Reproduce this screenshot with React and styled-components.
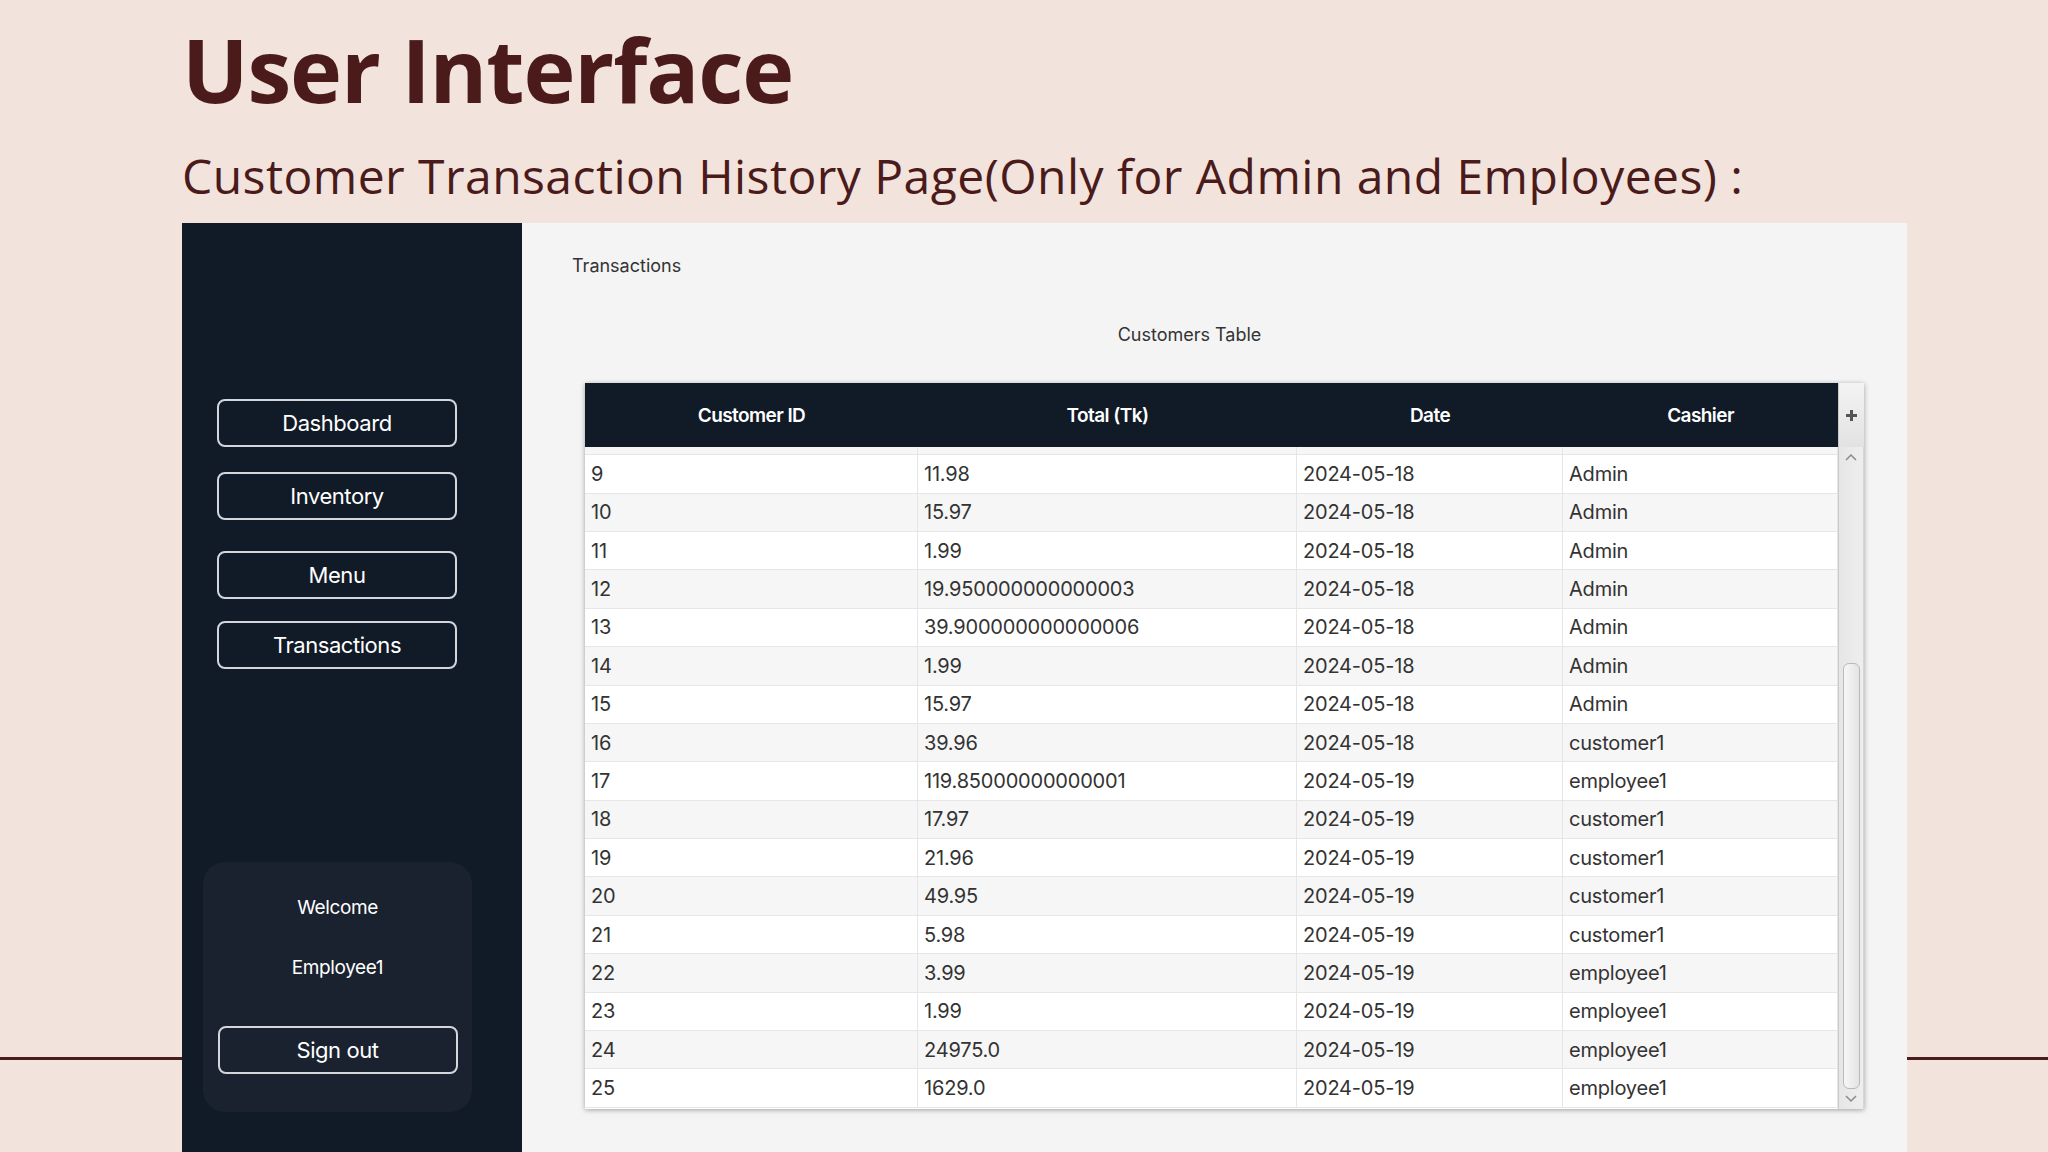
import React from 'react';
import styled, { createGlobalStyle } from 'styled-components';

const GlobalStyle = createGlobalStyle`
    html, body {
        margin: 0;
        padding: 0;
    }
    body {
        width: 2048px;
        height: 1152px;
        overflow: hidden;
        background: linear-gradient(#4b1c1c, #4b1c1c) 0 1057px / 100% 3px no-repeat, #f2e4dc;
    }
`;

const Slide = styled.div`
    padding: 17px 0 0 182px;
    height: 1152px;
    box-sizing: border-box;
`;

const Title = styled.h1`
    margin: 0;
    font-family: "Open Sans", "Noto Sans", sans-serif;
    font-size: 88px;
    font-weight: 700;
    line-height: 1.2;
    color: #4b1b1b;
    letter-spacing: -1.1px;
`;

const Subtitle = styled.h2`
    margin: 24px 0 0;
    font-family: "Open Sans", "Noto Sans", sans-serif;
    font-size: 48px;
    font-weight: 400;
    line-height: 1.2;
    color: #4b1b1b;
    letter-spacing: 0.45px;
`;

const Window = styled.div`
    margin-top: 19px;
    width: 1725px;
    height: 929px;
    display: flex;
    font-family: "Inter", "Liberation Sans", sans-serif;
`;

const Sidebar = styled.aside`
    width: 340px;
    flex-shrink: 0;
    background: #111a27;
    box-sizing: border-box;
    padding: 176px 0 40px 21px;
    display: flex;
    flex-direction: column;
    justify-content: space-between;
`;

const NavList = styled.nav`
    display: flex;
    flex-direction: column;
    padding-left: 14px;
`;

const NavButton = styled.button`
    width: 240px;
    height: 48px;
    margin-top: ${p => p.$gap || 0}px;
    background: transparent;
    border: 2px solid #d3d7dd;
    border-radius: 8px;
    color: #ffffff;
    font-family: "Inter", "Liberation Sans", sans-serif;
    font-size: 22px;
    letter-spacing: -0.02em;
    cursor: pointer;
`;

const UserCard = styled.div`
    width: 269px;
    height: 250px;
    box-sizing: border-box;
    padding: 34px 16px 38px;
    background: #1a2230;
    border-radius: 22px;
    display: flex;
    flex-direction: column;
    align-items: center;
`;

const UserText = styled.div`
    color: #ffffff;
    font-size: 19px;
    line-height: 24px;
    letter-spacing: -0.02em;
    margin-top: ${p => p.$gap || 0}px;
`;

const Main = styled.main`
    flex: 1;
    background: #f4f4f4;
    padding: 32px 43px 0 50px;
    box-sizing: border-box;
`;

const PageLabel = styled.div`
    font-size: 18px;
    line-height: 22px;
    color: #333;
`;

const TableCaption = styled.div`
    margin-top: 47px;
    padding: 0 70px 0 13px;
    text-align: center;
    font-size: 18px;
    line-height: 22px;
    color: #333;
`;

const TableView = styled.div`
    margin: 37px 0 0 13px;
    width: 1279px;
    box-shadow: 0 1px 5px rgba(0, 0, 0, 0.35);
    background: #fff;
`;

const Grid = styled.div`
    display: grid;
    grid-template-columns: 333px 379px 266px 275px 26px;
`;

const HeaderRow = styled(Grid)`
    height: 64px;
    background: #111a27;
`;

const HeaderCell = styled.div`
    display: flex;
    align-items: center;
    justify-content: center;
    color: #fff;
    font-size: 19px;
    font-weight: 600;
    letter-spacing: -0.03em;
`;

const Corner = styled.div`
    display: flex;
    align-items: center;
    justify-content: center;
    background: linear-gradient(#f3f3f3, #e2e2e2);
    border-left: 1px solid #c9c9c9;
`;

const Body = styled.div`
    display: flex;
    height: 662px;
`;

const Rows = styled.div`
    flex: 1;
    overflow: hidden;
`;

const RowList = styled.div`
    margin-top: -30.4px;
`;

const Row = styled.div`
    display: grid;
    grid-template-columns: 333px 379px 266px 275px;
    height: 38.4px;
    box-sizing: border-box;
    border-bottom: 1px solid #e6e6e6;
    background: ${p => (p.$alt ? '#f6f6f6' : '#ffffff')};
`;

const Cell = styled.div`
    display: flex;
    align-items: center;
    padding-left: 6px;
    border-right: 1px solid #e6e6e6;
    font-size: 20px;
    color: #333;
    letter-spacing: -0.01em;
    white-space: nowrap;
`;

const ScrollBar = styled.div`
    width: 26px;
    flex-shrink: 0;
    box-sizing: border-box;
    border-left: 1px solid #c9c9c9;
    border-right: 1px solid #d6d6d6;
    background: linear-gradient(90deg, #e6e6e6, #eeeeee);
    display: flex;
    flex-direction: column;
    align-items: center;
`;

const ArrowBox = styled.div`
    height: 20px;
    display: flex;
    align-items: center;
    justify-content: center;
`;

const Thumb = styled.div`
    margin-top: auto;
    width: 17px;
    height: 426px;
    box-sizing: border-box;
    border: 1px solid #b9b9b9;
    border-radius: 6px;
    background: linear-gradient(90deg, #f7f7f7, #e3e3e3);
`;

const columns = ['Customer ID', 'Total (Tk)', 'Date', 'Cashier'];

// row 8 is scrolled almost out of view, only its bottom edge shows
const rows = [
    ['8', '', '', ''],
    ['9', '11.98', '2024-05-18', 'Admin'],
    ['10', '15.97', '2024-05-18', 'Admin'],
    ['11', '1.99', '2024-05-18', 'Admin'],
    ['12', '19.950000000000003', '2024-05-18', 'Admin'],
    ['13', '39.900000000000006', '2024-05-18', 'Admin'],
    ['14', '1.99', '2024-05-18', 'Admin'],
    ['15', '15.97', '2024-05-18', 'Admin'],
    ['16', '39.96', '2024-05-18', 'customer1'],
    ['17', '119.85000000000001', '2024-05-19', 'employee1'],
    ['18', '17.97', '2024-05-19', 'customer1'],
    ['19', '21.96', '2024-05-19', 'customer1'],
    ['20', '49.95', '2024-05-19', 'customer1'],
    ['21', '5.98', '2024-05-19', 'customer1'],
    ['22', '3.99', '2024-05-19', 'employee1'],
    ['23', '1.99', '2024-05-19', 'employee1'],
    ['24', '24975.0', '2024-05-19', 'employee1'],
    ['25', '1629.0', '2024-05-19', 'employee1'],
];

const Chevron = ({ up }) => (
    <svg width="12" height="8" viewBox="0 0 12 8">
        <path d={up ? 'M1 7 L6 2 L11 7' : 'M1 1 L6 6 L11 1'} fill="none" stroke="#8a8a8a" strokeWidth="1.5" />
    </svg>
);

const PlusIcon = () => (
    <svg width="11" height="11" viewBox="0 0 11 11">
        <rect x="4" y="0" width="3" height="11" fill="#555" />
        <rect x="0" y="4" width="11" height="3" fill="#555" />
    </svg>
);

const App = () => (
    <>
        <GlobalStyle />
        <Slide>
            <Title>User Interface</Title>
            <Subtitle>Customer Transaction History Page(Only for Admin and Employees) :</Subtitle>
            <Window>
                <Sidebar>
                    <NavList>
                        <NavButton>Dashboard</NavButton>
                        <NavButton $gap={25}>Inventory</NavButton>
                        <NavButton $gap={31}>Menu</NavButton>
                        <NavButton $gap={22}>Transactions</NavButton>
                    </NavList>
                    <UserCard>
                        <UserText>Welcome</UserText>
                        <UserText $gap={36}>Employee1</UserText>
                        <NavButton $gap={46}>Sign out</NavButton>
                    </UserCard>
                </Sidebar>
                <Main>
                    <PageLabel>Transactions</PageLabel>
                    <TableCaption>Customers Table</TableCaption>
                    <TableView>
                        <HeaderRow>
                            {columns.map(c => <HeaderCell key={c}>{c}</HeaderCell>)}
                            <Corner><PlusIcon /></Corner>
                        </HeaderRow>
                        <Body>
                            <Rows>
                                <RowList>
                                    {rows.map(r => (
                                        <Row key={r[0]} $alt={Number(r[0]) % 2 === 0}>
                                            {r.map((v, i) => <Cell key={i}>{r[1] ? v : ''}</Cell>)}
                                        </Row>
                                    ))}
                                </RowList>
                            </Rows>
                            <ScrollBar>
                                <ArrowBox><Chevron up /></ArrowBox>
                                <Thumb />
                                <ArrowBox><Chevron /></ArrowBox>
                            </ScrollBar>
                        </Body>
                    </TableView>
                </Main>
            </Window>
        </Slide>
    </>
);

export default App;
